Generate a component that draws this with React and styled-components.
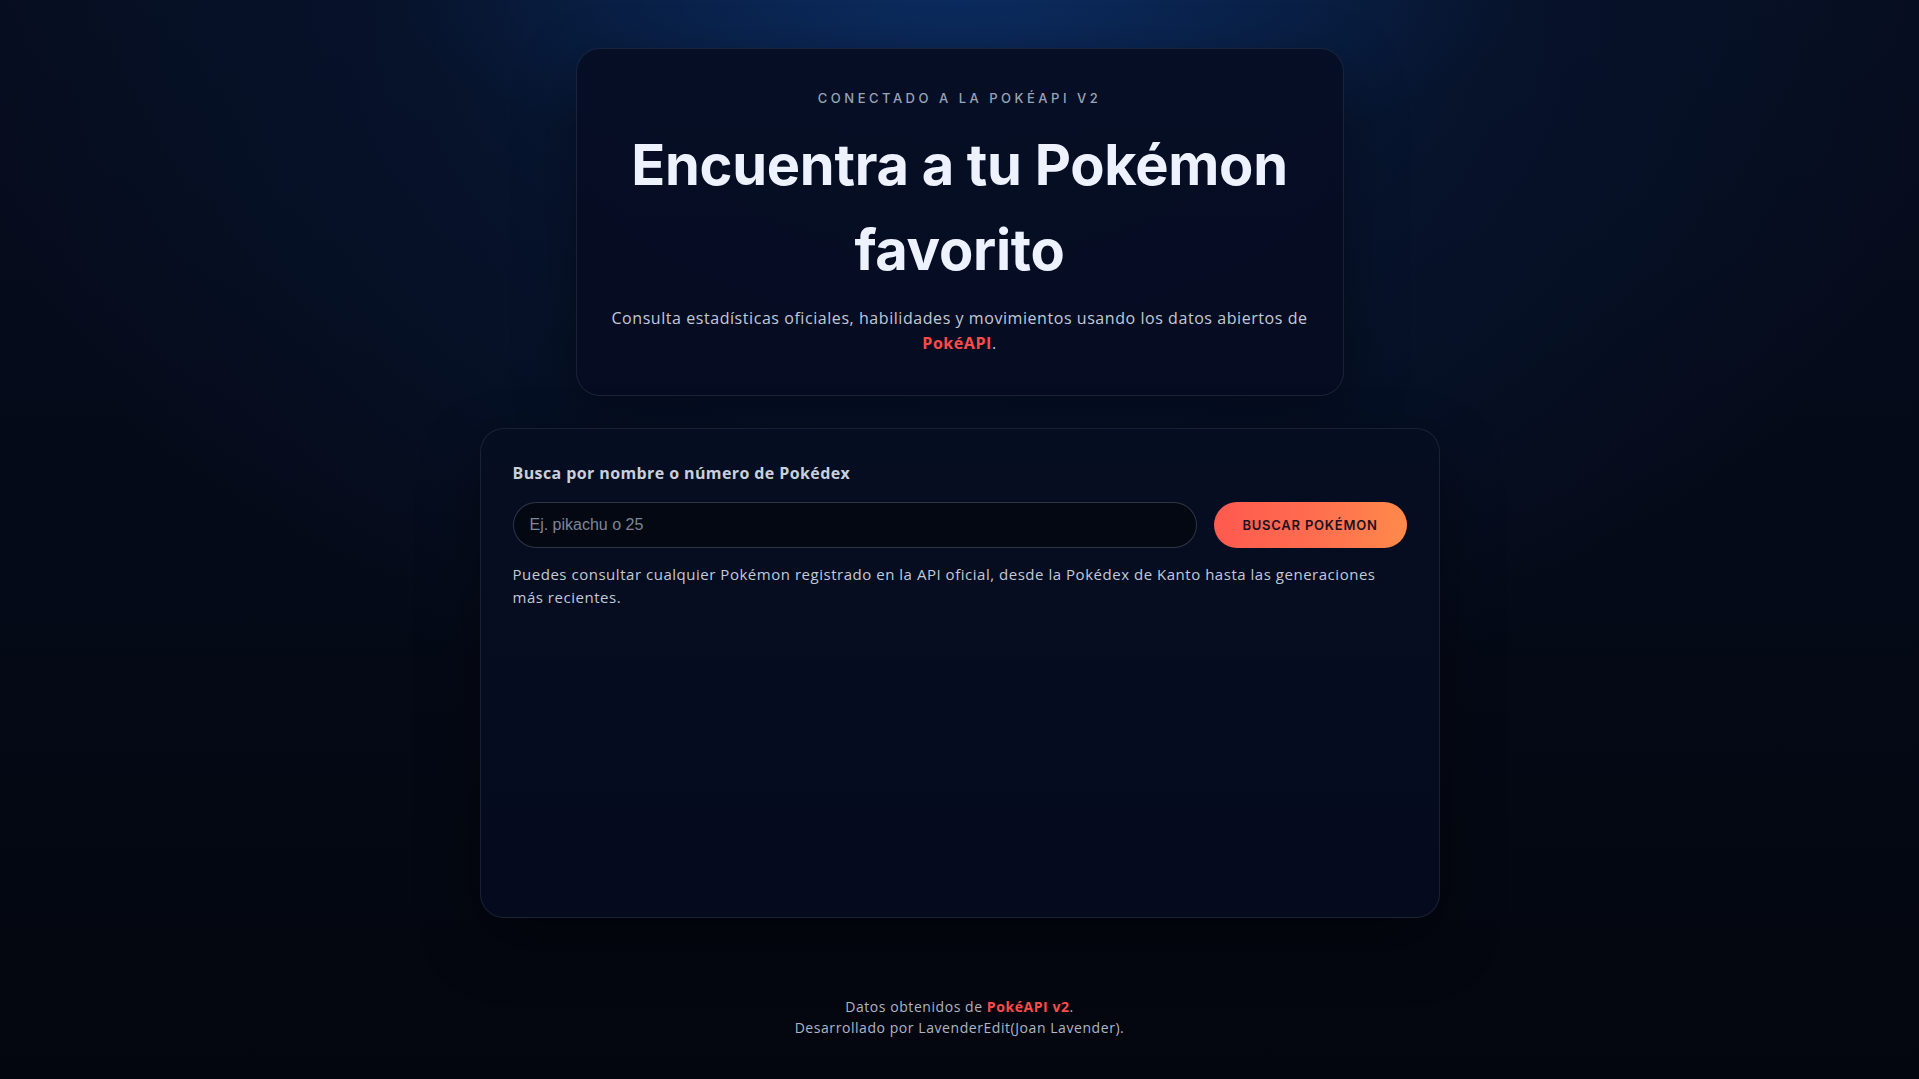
import React, { useState } from 'react';
import styled, { createGlobalStyle } from 'styled-components';

const GlobalStyle = createGlobalStyle`
  * { box-sizing: border-box; }
  html, body {
    margin: 0;
    min-height: 100%;
  }
  body {
    min-height: 1079px;
    font-family: "Open Sans", "Noto Sans", sans-serif;
    color: #c3c9d6;
    background:
      radial-gradient(ellipse 560px 180px at 50% 0, rgba(12, 44, 96, 0.9), rgba(12, 44, 96, 0) 100%),
      radial-gradient(ellipse 1000px 760px at 50% 0, rgba(9, 34, 74, 0.95), rgba(7, 24, 54, 0.6) 50%, rgba(5, 12, 28, 0) 100%),
      linear-gradient(180deg, #060d1f 0%, #050a18 50%, #03060e 100%);
  }
`;

const Page = styled.div`
  min-height: 1079px;
  display: flex;
  flex-direction: column;
  align-items: center;
  padding-top: 48px;
`;

const Main = styled.main`
  width: 960px;
  display: flex;
  flex-direction: column;
  align-items: center;
  gap: 32px;
`;

const Hero = styled.header`
  width: 768px;
  padding: 39px 32px 39px;
  border-radius: 24px;
  border: 1px solid rgba(148, 163, 200, 0.14);
  background: linear-gradient(180deg, rgba(6, 14, 36, 0.96), rgba(6, 13, 34, 0.96));
  box-shadow: 0 20px 60px rgba(0, 0, 0, 0.35);
  text-align: center;
`;

const Eyebrow = styled.p`
  margin: 0;
  font-family: Inter, "Open Sans", sans-serif;
  font-size: 13px;
  font-weight: 500;
  line-height: 20px;
  letter-spacing: 0.27em;
  text-transform: uppercase;
  color: #9aa3b6;
`;

const Title = styled.h1`
  margin: 15px 0 0;
  font-family: Inter, "Open Sans", sans-serif;
  font-size: 56px;
  font-weight: 700;
  line-height: 85px;
  letter-spacing: -0.005em;
  color: #eef2ff;
`;

const Lead = styled.p`
  margin: 13px 0 0;
  font-size: 16px;
  line-height: 25px;
  letter-spacing: 0.035em;
  color: #c3c9d6;
`;

const Accent = styled.strong`
  color: #ff4b4b;
  font-weight: 700;
`;

const SearchCard = styled.section`
  width: 960px;
  min-height: 490px;
  padding: 32px;
  border-radius: 24px;
  border: 1px solid rgba(148, 163, 200, 0.14);
  background: linear-gradient(180deg, rgba(6, 14, 34, 0.97), rgba(5, 11, 30, 0.97));
  box-shadow: 0 24px 60px rgba(0, 0, 0, 0.4);
`;

const Label = styled.label`
  display: block;
  font-size: 16px;
  font-weight: 700;
  line-height: 24px;
  letter-spacing: 0.025em;
  color: #c9cfdc;
`;

const SearchRow = styled.form`
  margin-top: 17px;
  display: flex;
  gap: 17px;
`;

const Input = styled.input`
  flex: 1;
  height: 46px;
  padding: 0 16px;
  border-radius: 999px;
  border: 1px solid rgba(160, 172, 200, 0.28);
  background: #040812;
  font-family: "Liberation Sans", Arial, sans-serif;
  font-size: 16px;
  color: #e6e9f2;
  outline: none;

  &::placeholder {
    color: #7d8596;
  }
`;

const Button = styled.button`
  width: 193px;
  height: 46px;
  border: none;
  border-radius: 999px;
  background: linear-gradient(90deg, #ff5a4f 0%, #ff6c4f 50%, #ff8a4b 100%);
  font-family: Inter, "Open Sans", sans-serif;
  font-size: 13px;
  font-weight: 600;
  letter-spacing: 0.06em;
  text-transform: uppercase;
  color: #1a1222;
  cursor: pointer;
`;

const Help = styled.p`
  margin: 15px 0 0;
  font-size: 15px;
  line-height: 23px;
  letter-spacing: 0.035em;
  color: #c3c9d6;
`;

const Footer = styled.footer`
  margin-top: 78px;
  padding-bottom: 24px;
  text-align: center;
  font-size: 14px;
  line-height: 21px;
  letter-spacing: 0.04em;
  color: #aeb5c5;
`;

const FooterLine = styled.p`
  margin: 0;
`;

export default function App() {
  const [query, setQuery] = useState('');

  return (
    <>
      <GlobalStyle />
      <Page>
        <Main>
          <Hero>
            <Eyebrow>Conectado a la PokéAPI v2</Eyebrow>
            <Title>Encuentra a tu Pokémon favorito</Title>
            <Lead>
              Consulta estadísticas oficiales, habilidades y movimientos usando los datos abiertos de{' '}
              <Accent>PokéAPI</Accent>.
            </Lead>
          </Hero>

          <SearchCard>
            <Label htmlFor="pokemon">Busca por nombre o número de Pokédex</Label>
            <SearchRow onSubmit={(e) => e.preventDefault()}>
              <Input
                id="pokemon"
                placeholder="Ej. pikachu o 25"
                value={query}
                onChange={(e) => setQuery(e.target.value)}
              />
              <Button type="submit">Buscar Pokémon</Button>
            </SearchRow>
            <Help>
              Puedes consultar cualquier Pokémon registrado en la API oficial, desde la Pokédex de Kanto hasta las generaciones más recientes.
            </Help>
          </SearchCard>
        </Main>

        <Footer>
          <FooterLine>
            Datos obtenidos de <Accent>PokéAPI v2</Accent>.
          </FooterLine>
          <FooterLine>Desarrollado por LavenderEdit(Joan Lavender).</FooterLine>
        </Footer>
      </Page>
    </>
  );
}
